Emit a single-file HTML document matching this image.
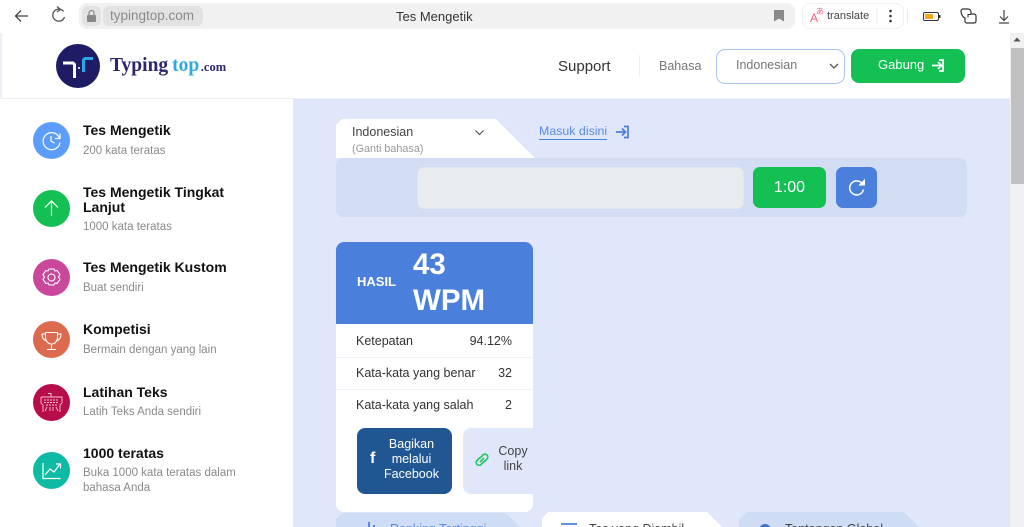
<!DOCTYPE html>
<html><head><meta charset="utf-8"><style>
*{box-sizing:border-box}
html,body{margin:0;padding:0;width:1024px;height:527px;overflow:hidden;background:#e1e7fa;font-family:"Liberation Sans",sans-serif}
.a{position:absolute;white-space:nowrap}
.t{font-weight:bold;font-size:14px;line-height:15px;color:#111}
.s{font-size:11.500px;line-height:15px;color:#8a8a8a}
.c{position:absolute;left:33px;width:37px;height:37px;border-radius:50%}
svg{position:absolute;overflow:visible}
#w{position:absolute;left:0;top:0;width:1024px;height:527px;overflow:hidden;filter:blur(.3px)}
</style></head><body><div id="w">
<!-- browser bar -->
<div class="a" style="left:0;top:0;width:1024px;height:33px;background:#fff"></div>
<svg style="left:0;top:0" width="1024" height="33" fill="none" stroke="#444" stroke-width="1.300">
<path d="M28 16H16M21 10.500L15.500 16L21 21.500"/>
<path d="M63.500 11.500A6 6 0 1 0 64.500 17" stroke="#555"/><path d="M57 6.500L60.500 9.500L57 12" stroke="#555"/>
</svg>
<div class="a" style="left:79px;top:3px;width:716px;height:26px;background:#f1f1f1;border-radius:8px"></div>
<div class="a" style="left:82px;top:6px;width:19px;height:20px;background:#e2e2e2;border-radius:6px"></div>
<svg style="left:0;top:0" width="120" height="33"><rect x="87" y="15" width="9" height="7" rx="1" fill="#888"/><path d="M89 15v-2a2.500 2.500 0 0 1 5 0v2" fill="none" stroke="#888" stroke-width="1.200"/></svg>
<div class="a" style="left:103px;top:6px;width:100px;height:20px;background:#e2e2e2;border-radius:6px;color:#8a8a8a;font-size:13.500px;line-height:20px;padding-left:7px">typingtop.com</div>
<div class="a" style="left:396px;top:9px;font-size:13px;line-height:16px;color:#333">Tes Mengetik</div>
<svg style="left:0;top:0" width="1024" height="33"><path d="M774 10h10v11.500l-5-3-5 3z" fill="#8a8a8a"/></svg>
<div class="a" style="left:802px;top:3px;width:102px;height:26px;border:1px solid #f0f0f0;border-radius:8px;background:#fff"></div>
<div class="a" style="left:810px;top:12px;font-size:12px;line-height:12px;color:#f0647a">A</div>
<div class="a" style="left:816px;top:7px;font-size:8px;line-height:10px;color:#f0647a;font-family:'Noto Sans CJK JP',sans-serif">あ</div>
<div class="a" style="left:827px;top:9px;font-size:11px;line-height:14px;color:#444">translate</div>
<svg style="left:0;top:0" width="1024" height="33">
<path d="M877 9v14M907.500 9v14" stroke="#e8e8e8"/>
<circle cx="890.500" cy="11" r="1.300" fill="#333"/><circle cx="890.500" cy="16" r="1.300" fill="#333"/><circle cx="890.500" cy="21" r="1.300" fill="#333"/>
<rect x="923.500" y="12.500" width="15" height="8" rx="1.500" fill="#fff" stroke="#333"/><rect x="925" y="14" width="8" height="5" fill="#f5a81c"/><rect x="939" y="15" width="1.500" height="3" fill="#333"/>
<path d="M961 11a2 2 0 0 1 2-2h5a3 3 0 0 1 3 3v2h3a2 2 0 0 1 2 2v5a2 2 0 0 1-2 2h-7a2 2 0 0 1-2-2v-3c-2-.5-4-4-4-7z" fill="none" stroke="#333" stroke-width="1.200"/><path d="M971 14.500h-3v3" fill="none" stroke="#333"/>
<path d="M1004 10v10M1000 16.500l4 4l4-4M999 23h10" fill="none" stroke="#444" stroke-width="1.200"/>
</svg>
<!-- sidebar -->
<div class="a" style="left:0;top:99px;width:293px;height:428px;background:#fff"></div>
<!-- header -->
<div class="a" style="left:2px;top:33px;width:1008px;height:66px;background:#fff;border-bottom:1px solid #eceef7"></div>
<div class="a" style="left:0;top:33px;width:2px;height:66px;background:#eef0f8"></div>
<div class="a" style="left:56px;top:44px;width:44px;height:44px;border-radius:50%;background:#1f1c66"></div>
<svg style="left:0;top:33px" width="120" height="66" fill="none"><path d="M63 30h10l1.500 1.500V45" stroke="#fff" stroke-width="3"/><path d="M93 25.500h-8l-1.500 1.500V39" stroke="#2ca8e8" stroke-width="3"/><circle cx="79" cy="35" r="1" fill="#fff"/></svg>
<div class="a" style="left:110px;top:55px;font-family:'Liberation Serif',serif;font-weight:bold;font-size:19.500px;line-height:22px;color:#2a2670">Typing<span style="color:#2fa9e6;margin-left:4px">top</span><span style="font-size:12.500px;margin-left:1.500px">.com</span></div>
<div class="a" style="left:558px;top:58px;font-size:15px;line-height:18px;color:#333">Support</div>
<div class="a" style="left:639px;top:55px;width:1px;height:22px;background:#eee"></div>
<div class="a" style="left:659px;top:58px;font-size:12.500px;line-height:16px;color:#777">Bahasa</div>
<div class="a" style="left:716px;top:49px;width:129px;height:35px;border:1px solid #a9c4ef;border-radius:9px;background:#fff;padding-left:19px;font-size:12.500px;line-height:31px;color:#777">Indonesian</div>
<svg style="left:0;top:33px" width="1024" height="66" fill="none"><path d="M830 31l4 4l4-4" stroke="#555" stroke-width="1.300"/></svg>
<div class="a" style="left:851px;top:49px;width:114px;height:34px;background:#14bf53;border-radius:8px;color:#fff;font-size:13px;line-height:31px;padding-left:27px">Gabung</div>
<svg style="left:0;top:33px" width="1024" height="66" fill="none" stroke="#fff" stroke-width="1.700"><path d="M932 32.500h9M938 29l3.500 3.500l-3.500 3.500M939 27h4v11h-4"/></svg>
<!-- scrollbar -->
<div class="a" style="left:1010px;top:33px;width:14px;height:494px;background:#f1f1f1"></div>
<div class="a" style="left:1011px;top:48px;width:13px;height:136px;background:#c1c1c1"></div>
<svg style="left:0;top:0" width="1024" height="60"><path d="M1017 37.500l3.500 4h-7z" fill="#505050"/></svg>
<!-- sidebar items -->
<div class="c" style="top:122px;background:#5c9dfb"></div>
<svg style="left:33px;top:122px" width="37" height="37" fill="none" stroke="#fff" stroke-width="1.200"><path d="M26.500 16A8.500 8.500 0 1 0 27 20.500"/><path d="M27 11.500v5h-5"/><path d="M18 14v5l3.500 2"/></svg>
<div class="a t" style="left:83px;top:123px">Tes Mengetik</div><div class="a s" style="left:83px;top:144px">200 kata teratas</div>
<div class="c" style="top:190px;background:#14bf53"></div>
<svg style="left:33px;top:190px" width="37" height="37" fill="none" stroke="#fff" stroke-width="1.200"><path d="M18.500 26V11M12 17.500l6.500-6.500l6.500 6.500"/></svg>
<div class="a t" style="left:83px;top:185px">Tes Mengetik Tingkat<br>Lanjut</div><div class="a s" style="left:83px;top:220px">1000 kata teratas</div>
<div class="c" style="top:259px;background:#c9489b"></div>
<svg style="left:33px;top:259px" width="37" height="37" fill="none" stroke="#fff" stroke-width="1.100"><circle cx="18.500" cy="18.500" r="3.500"/><path d="M16 10h5l1 2 2-.5 3 4-1.500 2.500 1.500 2.500-3 4-2-.5-1 2h-5l-1-2-2 .5-3-4 1.500-2.500-1.500-2.500 3-4 2 .5z"/></svg>
<div class="a t" style="left:83px;top:260px">Tes Mengetik Kustom</div><div class="a s" style="left:83px;top:281px">Buat sendiri</div>
<div class="c" style="top:321px;background:#dc6a4e"></div>
<svg style="left:33px;top:321px" width="37" height="37" fill="none" stroke="#fff" stroke-width="1.100"><path d="M12.500 11.500h12v4.500c0 4-2.500 7-6 7s-6-3-6-7zM12.500 13H9c0 4 1.500 6 4.500 7M24.500 13H28c0 4-1.500 6-4.500 7M18.500 23v5M14 28.500h9"/></svg>
<div class="a t" style="left:83px;top:322px">Kompetisi</div><div class="a s" style="left:83px;top:343px">Bermain dengan yang lain</div>
<div class="c" style="top:384px;background:#b80d4b"></div>
<svg style="left:33px;top:384px" width="37" height="37" fill="none" stroke="#f5c6d6" stroke-width=".9"><path d="M8 13h21v6l-2 2v7M8 13v6l2 2v7M18 13V9.500h-3"/><path d="M11 16h15M11 18.500h15M13 21h11" stroke-dasharray="2 1"/><path d="M17 23v4M20 23v4M14 23l-2 4M23 23l2 4"/></svg>
<div class="a t" style="left:83px;top:385px">Latihan Teks</div><div class="a s" style="left:83px;top:405px">Latih Teks Anda sendiri</div>
<div class="c" style="top:452px;background:#0dbba5"></div>
<svg style="left:33px;top:452px" width="37" height="37" fill="none" stroke="#fff" stroke-width="1.200"><path d="M10 11v15.500h17.500M12 23l5-6l4 3l6-8M23 12h4.500v4.500"/></svg>
<div class="a t" style="left:83px;top:446px">1000 teratas</div><div class="a s" style="left:83px;top:466px">Buka 1000 kata teratas dalam<br>bahasa Anda</div>
<!-- language tab -->
<div class="a" style="left:336px;top:119px;width:199px;height:39px;background:#fff;clip-path:polygon(6px 0,160px 0,199px 39px,0 39px,0 6px)"></div>
<div class="a" style="left:352px;top:125px;font-size:12.500px;line-height:15px;color:#444">Indonesian</div>
<div class="a" style="left:352px;top:143px;font-size:10.800px;line-height:13px;color:#999">(Ganti bahasa)</div>
<svg style="left:0;top:0" width="1024" height="200" fill="none">
<path d="M475.500 130.500l4 4l4-4" stroke="#555" stroke-width="1.200"/>
<path d="M616 132h9M622 128.500l3.500 3.500l-3.500 3.500M624 126.500h4v11h-4" stroke="#4a7fda" stroke-width="1.700"/>
</svg>
<div class="a" style="left:539px;top:124px;font-size:12.400px;line-height:15px;color:#5a8be0;border-bottom:1px solid #4a7fda;height:16px">Masuk disini</div>
<!-- typing bar -->
<div class="a" style="left:336px;top:158px;width:631px;height:59px;background:#d2ddf4;border-radius:7px"></div>
<div class="a" style="left:417px;top:167px;width:327px;height:42px;background:#e8ecef;border:1px solid #e0e6ee;border-radius:7px"></div>
<div class="a" style="left:753px;top:167px;width:73px;height:41px;background:#14bf53;border-radius:7px;color:#fff;font-size:16px;line-height:41px;text-align:center">1:00</div>
<div class="a" style="left:836px;top:167px;width:41px;height:41px;background:#4a80dc;border-radius:7px"></div>
<svg style="left:836px;top:167px" width="41" height="41" fill="none" stroke="#fff" stroke-width="1.500"><path d="M26.500 17A7 7 0 1 0 27.500 22.500"/><path d="M28.500 13v5h-5z" fill="#fff" stroke-width="1"/></svg>
<!-- result card -->
<div class="a" style="left:336px;top:242px;width:197px;height:270px;background:#fff;border-radius:8px"></div>
<div class="a" style="left:336px;top:242px;width:197px;height:82px;background:#4a80dc;border-radius:8px 8px 0 0"></div>
<div class="a" style="left:357px;top:274px;font-size:13px;line-height:15px;font-weight:bold;color:#fff">HASIL</div>
<div class="a" style="left:413px;top:247px;font-size:29.500px;line-height:36px;font-weight:bold;color:#fff">43<br>WPM</div>
<div class="a" style="left:336px;top:357px;width:197px;height:1px;background:#f0f3fc"></div>
<div class="a" style="left:336px;top:389px;width:197px;height:1px;background:#f0f3fc"></div>
<div class="a" style="left:356px;top:333px;font-size:12.500px;line-height:16px;color:#333">Ketepatan</div>
<div class="a" style="right:512px;top:333px;font-size:12.500px;line-height:16px;color:#333">94.12%</div>
<div class="a" style="left:356px;top:365px;font-size:12.500px;line-height:16px;color:#333">Kata-kata yang benar</div>
<div class="a" style="right:512px;top:365px;font-size:12.500px;line-height:16px;color:#333">32</div>
<div class="a" style="left:356px;top:397px;font-size:12.500px;line-height:16px;color:#333">Kata-kata yang salah</div>
<div class="a" style="right:512px;top:397px;font-size:12.500px;line-height:16px;color:#333">2</div>
<div class="a" style="left:357px;top:428px;width:95px;height:66px;background:#205793;border-radius:8px"></div>
<div class="a" style="left:370px;top:450px;font-size:16px;line-height:18px;font-weight:bold;color:#fff">f</div>
<div class="a" style="left:380.500px;top:437px;width:62px;font-size:12.500px;line-height:15px;color:#fff;text-align:center">Bagikan<br>melalui<br>Facebook</div>
<div class="a" style="left:463px;top:428px;width:70px;height:66px;background:#e1e7fa;border-radius:8px 0 0 8px"></div>
<svg style="left:0;top:0" width="1024" height="527" fill="none" stroke="#22c55e" stroke-width="1.600"><path d="M480 458l3-3a2.800 2.800 0 0 1 4 4l-3 3M484 461.500l-3 3a2.800 2.800 0 0 1-4-4l3-3M480 462l4-4"/></svg>
<div class="a" style="left:494px;top:444px;width:38px;font-size:12.500px;line-height:15px;color:#444;text-align:center">Copy<br>link</div>
<!-- bottom tabs -->
<div class="a" style="left:336px;top:513px;width:190px;height:14px;background:#cedcf6;clip-path:polygon(6px 0,170px 0,190px 20px,0 20px,0 6px)"></div>
<div class="a" style="left:542px;top:512px;width:182px;height:15px;background:#fff;clip-path:polygon(6px 0,165px 0,182px 17px,0 17px,0 6px)"></div>
<div class="a" style="left:739px;top:512px;width:180px;height:15px;background:#cedcf6;clip-path:polygon(8px 0,165px 0,182px 17px,0 17px,0 8px)"></div>
<svg style="left:0;top:0" width="1024" height="527" fill="none" stroke="#4a80dc" stroke-width="1.800"><path d="M369 522v6M374 525v3M561 524h16M561 528h16"/><circle cx="765" cy="530" r="6" fill="#3d72cc" stroke="none"/></svg>
<div class="a" style="left:390px;top:522px;font-size:12.500px;line-height:15px;color:#5a8be0">Ranking Tertinggi</div>
<div class="a" style="left:589px;top:522px;font-size:12.500px;line-height:15px;color:#444">Tes yang Diambil</div>
<div class="a" style="left:785px;top:522px;font-size:12.500px;line-height:15px;color:#444">Tantangan Global</div>
</div></body></html>
